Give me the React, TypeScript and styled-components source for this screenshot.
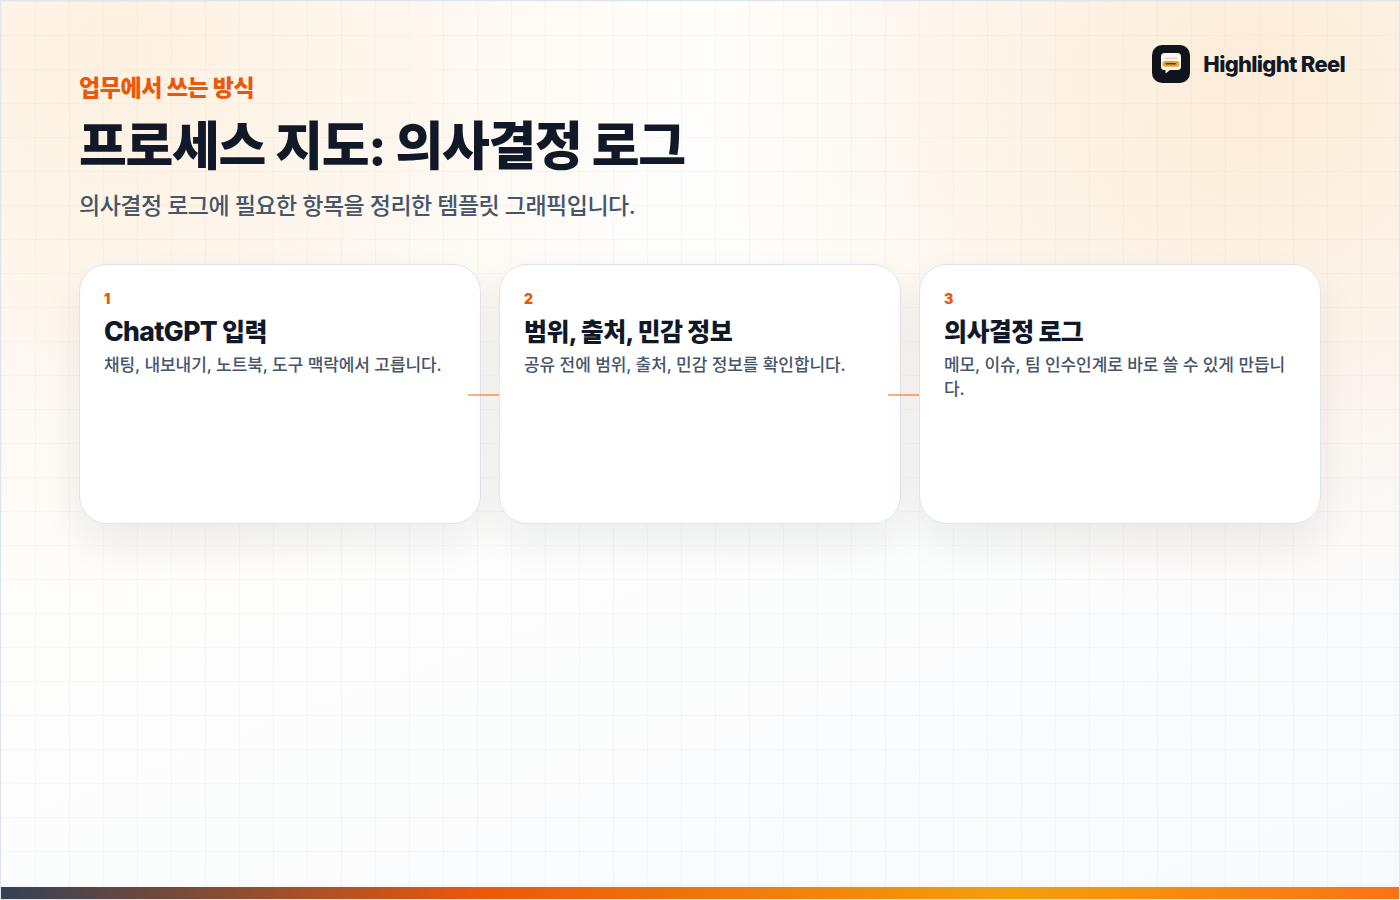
import styled, { createGlobalStyle } from 'styled-components';

const GlobalStyle = createGlobalStyle`
  html, body {
    margin: 0;
    padding: 0;
    background: #fff;
  }
  * {
    box-sizing: border-box;
  }
`;

const Slide = styled.div`
  position: relative;
  display: flex;
  flex-direction: column;
  width: 1400px;
  height: 900px;
  overflow: hidden;
  border: 1px solid #dfe5ef;
  font-family: Inter, "Noto Sans CJK KR", "Noto Sans", sans-serif;
  color: #111827;
  background:
    linear-gradient(rgba(120, 90, 60, 0.035) 1px, transparent 1px) 0 0 / 34px 34px,
    linear-gradient(90deg, rgba(120, 90, 60, 0.035) 1px, transparent 1px) 0 0 / 34px 34px,
    radial-gradient(circle at 90% 9%, rgba(251, 160, 60, 0.19), transparent 36%),
    radial-gradient(circle at 8% 6%, rgba(251, 165, 70, 0.14), transparent 36%),
    linear-gradient(160deg, #fffdfa 0%, #fdfdfc 50%, #f8fafc 100%);
`;

const Content = styled.main`
  flex: 1;
  padding: 71px 78px 0;
`;

const Kicker = styled.div`
  font-size: 23px;
  line-height: 32px;
  font-weight: 800;
  letter-spacing: -0.4px;
  color: #ea580c;
`;

const Title = styled.h1`
  margin: 11px 0 0;
  font-size: 52px;
  line-height: 64px;
  font-weight: 800;
  letter-spacing: -1.3px;
  color: #111827;
`;

const Subtitle = styled.p`
  margin: 9px 0 0;
  font-size: 23px;
  line-height: 36px;
  font-weight: 500;
  letter-spacing: -0.52px;
  color: #475569;
`;

const Brand = styled.div`
  position: absolute;
  top: 44px;
  right: 54px;
  display: flex;
  align-items: center;
  gap: 13px;
  font-size: 22px;
  font-weight: 800;
  letter-spacing: -0.7px;
  color: #111827;
`;

const Steps = styled.div`
  display: grid;
  grid-template-columns: repeat(3, 402px);
  gap: 18px;
  margin-top: 40px;
`;

const Step = styled.section`
  position: relative;
  height: 260px;
  padding: 24px;
  border: 1px solid #dfe4ec;
  border-radius: 28px;
  background: rgba(255, 255, 255, 0.97);
  box-shadow: 0 18px 40px rgba(15, 23, 42, 0.07);

  &:not(:last-child)::after {
    content: '';
    position: absolute;
    top: 129px;
    right: -32px;
    width: 44px;
    height: 2px;
    background: rgba(249, 115, 22, 0.55);
  }
`;

const StepNumber = styled.div`
  font-size: 14px;
  line-height: 20px;
  font-weight: 900;
  color: #ea580c;
`;

const StepTitle = styled.h2`
  margin: 6px 0 0;
  font-size: 25px;
  line-height: 34px;
  font-weight: 800;
  letter-spacing: -0.6px;
  color: #111827;
`;

const LatinWord = styled.span`
  font-size: 26.5px;
  line-height: 1;
`;

const StepText = styled.p`
  margin: 4px 0 0;
  font-size: 17px;
  line-height: 24px;
  font-weight: 500;
  letter-spacing: -0.08px;
  color: #475569;
`;

const ProgressBar = styled.div`
  height: 12px;
  flex: none;
  background: linear-gradient(90deg, #334155 0%, #ea580c 34%, #f59e0b 72%, #f97316 100%);
`;

const steps = [
  { id: 'input', title: <><LatinWord>ChatGPT</LatinWord> 입력</>, text: '채팅, 내보내기, 노트북, 도구 맥락에서 고릅니다.' },
  { id: 'check', title: '범위, 출처, 민감 정보', text: '공유 전에 범위, 출처, 민감 정보를 확인합니다.' },
  { id: 'log', title: '의사결정 로그', text: '메모, 이슈, 팀 인수인계로 바로 쓸 수 있게 만듭니다.' },
];

function BrandMark() {
  return (
    <svg width="38" height="38" viewBox="0 0 38 38" aria-hidden="true">
      <rect width="38" height="38" rx="10" fill="#11141c" />
      <path
        d="M12.500 8h13a3.500 3.500 0 0 1 3.500 3.500v10a3.500 3.500 0 0 1-3.500 3.500h-7.500L13.500 28.500V25h-1A3.500 3.500 0 0 1 9 21.500v-10A3.500 3.500 0 0 1 12.500 8z"
        fill="#fff7ea"
      />
      <rect x="12.500" y="12.500" width="13" height="1.600" rx="0.800" fill="#d9d6d0" />
      <rect x="10.500" y="16" width="17" height="5.800" rx="2.900" fill="#eaa33a" />
      <rect x="13.500" y="18" width="10.500" height="1.600" rx="0.800" fill="#5a3310" />
    </svg>
  );
}

export default function App() {
  return (
    <>
      <GlobalStyle />
      <Slide>
        <Content>
          <Kicker>업무에서 쓰는 방식</Kicker>
          <Title>프로세스 지도: 의사결정 로그</Title>
          <Subtitle>의사결정 로그에 필요한 항목을 정리한 템플릿 그래픽입니다.</Subtitle>
          <Steps>
            {steps.map((step, index) => (
              <Step key={step.id}>
                <StepNumber>{index + 1}</StepNumber>
                <StepTitle>{step.title}</StepTitle>
                <StepText>{step.text}</StepText>
              </Step>
            ))}
          </Steps>
        </Content>
        <Brand>
          <BrandMark />
          Highlight Reel
        </Brand>
        <ProgressBar />
      </Slide>
    </>
  );
}
